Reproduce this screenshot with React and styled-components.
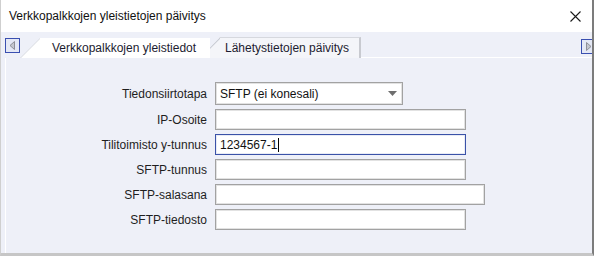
import React from 'react';
import styled, { createGlobalStyle } from 'styled-components';

const GlobalStyle = createGlobalStyle`
  html, body {
    margin: 0;
    padding: 0;
    background: #fff;
  }
  * {
    box-sizing: border-box;
  }
`;

const Window = styled.div`
  width: 594px;
  height: 256px;
  display: flex;
  flex-direction: column;
  background: #eef0f8;
  border-left: 1px solid #cfcfcf;
  border-right: 2px solid #7c7c7c;
  border-bottom: 3px solid #c6c6c6;
  font-family: "Liberation Sans", Arial, sans-serif;
  font-size: 12px;
  color: #1a1a1a;
  overflow: hidden;
`;

const TitleBar = styled.div`
  height: 32px;
  flex: none;
  display: flex;
  align-items: center;
  justify-content: space-between;
  padding: 0 11px 0 8px;
  background: #fff;
  color: #111;
`;

const TabStrip = styled.div`
  height: 26px;
  flex: none;
  display: flex;
  align-items: flex-end;
  padding-left: 4px;
  overflow: hidden;
`;

const ArrowButton = styled.div`
  width: 15px;
  height: 15px;
  flex: none;
  align-self: flex-start;
  margin-top: ${p => p.$top}px;
  margin-right: ${p => p.$pull || 0}px;
  display: flex;
  align-items: center;
  justify-content: center;
  border: 1px solid #3a4fb0;
  background: #e4e8f5;
`;

const Tab = styled.div`
  position: relative;
  z-index: ${p => (p.$active ? 2 : 1)};
  height: ${p => (p.$active ? 20 : 21)}px;
  width: ${p => p.$width}px;
  margin-left: ${p => p.$shift || 0}px;
  flex: none;
  display: flex;
  align-items: center;
  padding-left: ${p => p.$indent}px;
  padding-bottom: 1px;
  white-space: nowrap;
  overflow: hidden;
  color: #1c1c30;
  clip-path: polygon(0 100%, 20px 0, 100% 0, 100% 100%);
  background:
    linear-gradient(
      to bottom right,
      transparent calc(50% - 1.2px),
      ${p => (p.$active ? '#d0d3dc' : '#c9ccd4')} 50%,
      transparent calc(50% + 1.2px)
    ) left top / 20px 100% no-repeat,
    ${p => (p.$active ? '#fff' : '#f4f5f9')};
  border-top: ${p => (p.$active ? 'none' : '1px solid #d6d8de')};
  border-right: ${p => (p.$active ? 'none' : '2px solid #c8cad0')};
`;

const Filler = styled.div`
  flex: 1;
  align-self: stretch;
  display: flex;
  justify-content: flex-end;
  border-bottom: 1px solid #fff;
`;

const Panel = styled.div`
  flex: 1;
  margin-left: 4px;
  border-left: 1px solid #fff;
  padding-top: 24px;
`;

const Form = styled.div`
  display: grid;
  grid-template-columns: 201px auto;
  column-gap: 8px;
  row-gap: 4px;
  justify-items: start;
  align-items: center;
`;

const Label = styled.div`
  justify-self: end;
  white-space: nowrap;
  color: #1e1e1e;
`;

const Field = styled.div`
  width: ${p => p.$width}px;
  height: ${p => p.$height || 21}px;
  display: flex;
  align-items: center;
  padding: 0 5px 0 4px;
  background: #fff;
  border: 1px solid ${p => (p.$focused ? '#3a52a8' : '#a2a2a2')};
  box-shadow: inset 0 0 0 1px ${p => (p.$focused ? '#e8ebf5' : '#e2e2e2')};
  color: #111;
  white-space: nowrap;
`;

const Value = styled.span`
  flex: 1;
`;

const Caret = styled.span`
  display: inline-block;
  width: 1px;
  height: 14px;
  margin-left: 1px;
  background: #000;
`;

const CloseIcon = () => (
  <svg width="11" height="11" viewBox="0 0 11 11">
    <path d="M0.5 0.5 L10.5 10.5 M10.5 0.5 L0.5 10.5" stroke="#1a1a1a" strokeWidth="1.1" />
  </svg>
);

const Triangle = ({ dir }) => (
  <svg width="7" height="9" viewBox="0 0 7 9">
    {dir === 'left'
      ? <path d="M5.5 0.5 L1 4.5 L5.5 8.5 Z" fill="#c4c6ce" stroke="#8e9098" strokeWidth="1" />
      : <path d="M1.5 0.5 L6 4.5 L1.5 8.5 Z" fill="#c4c6ce" stroke="#8e9098" strokeWidth="1" />}
  </svg>
);

const DropArrow = () => (
  <svg width="9" height="5" viewBox="0 0 9 5">
    <path d="M0 0 H9 L4.5 5 Z" fill="#6e6e6e" />
  </svg>
);

const rows = [
  { label: 'IP-Osoite', width: 251 },
  { label: 'Tilitoimisto y-tunnus', width: 251, value: '1234567-1', focused: true },
  { label: 'SFTP-tunnus', width: 251 },
  { label: 'SFTP-salasana', width: 270 },
  { label: 'SFTP-tiedosto', width: 251 },
];

export default function App() {
  return (
    <>
      <GlobalStyle />
      <Window>
        <TitleBar>
          <span>Verkkopalkkojen yleistietojen päivitys</span>
          <CloseIcon />
        </TitleBar>
        <TabStrip>
          <ArrowButton $top={6}>
            <Triangle dir="left" />
          </ArrowButton>
          <Tab $active $width={190} $indent={32}>Verkkopalkkojen yleistiedot</Tab>
          <Tab $width={161} $shift={-10} $indent={25}>Lähetystietojen päivitys</Tab>
          <Filler>
            <ArrowButton $top={7} $pull={-4}>
              <Triangle dir="right" />
            </ArrowButton>
          </Filler>
        </TabStrip>
        <Panel>
          <Form>
            <Label>Tiedonsiirtotapa</Label>
            <Field $width={188} $height={23}>
              <Value>SFTP (ei konesali)</Value>
              <DropArrow />
            </Field>
            {rows.map(row => (
              <React.Fragment key={row.label}>
                <Label>{row.label}</Label>
                <Field $width={row.width} $focused={row.focused}>
                  {row.value && <span>{row.value}</span>}
                  {row.focused && <Caret />}
                </Field>
              </React.Fragment>
            ))}
          </Form>
        </Panel>
      </Window>
    </>
  );
}
